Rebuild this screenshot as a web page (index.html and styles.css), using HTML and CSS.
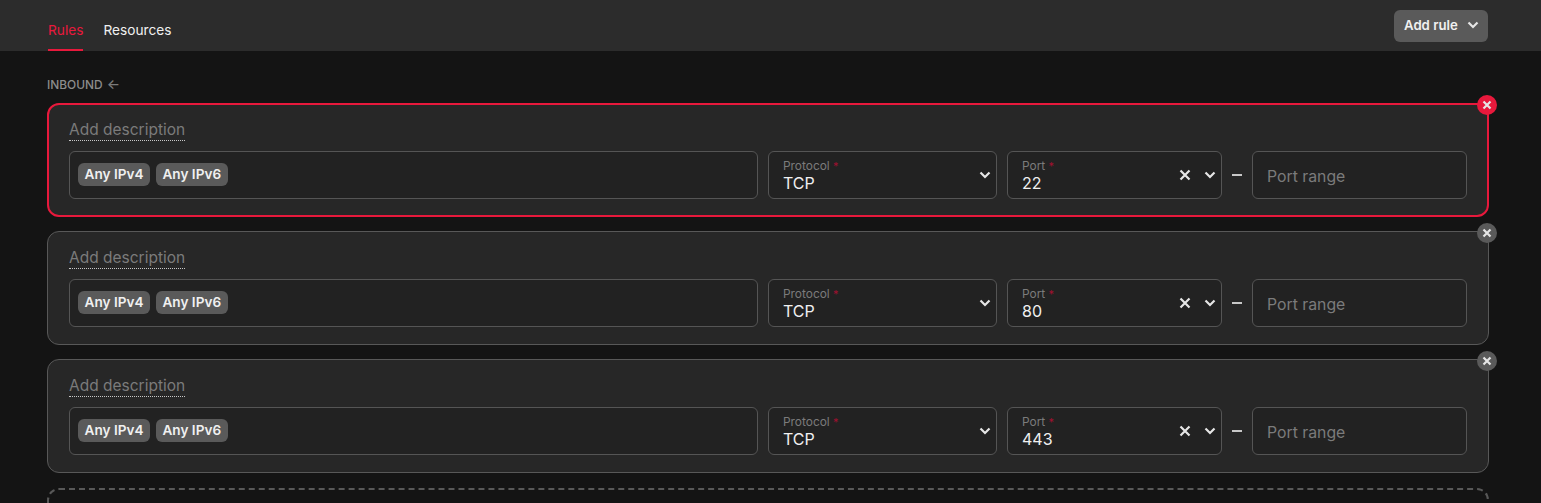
FILE: index.html
```html
<!DOCTYPE html>
<html lang="en">
<head>
    <meta charset="UTF-8">
    <title>Rules</title>
    <link rel="stylesheet" href="styles.css">
</head>
<body>
    <header class="topbar">
        <nav class="tabs">
            <a class="tab active">Rules</a>
            <a class="tab">Resources</a>
        </nav>
        <button type="button" class="add-btn">Add rule
            <svg class="chev" width="12" height="8" viewBox="0 0 12 8"><path d="M1.5 1.5 6 6l4.5-4.5" /></svg>
        </button>
    </header>

    <main class="content">
        <div class="section-title">INBOUND <span class="arrow">←</span></div>

        <!-- rule 1 -->
        <div class="rule selected">
            <span class="remove"><svg width="10" height="10" viewBox="0 0 10 10"><path d="M1.5 1.5l7 7M8.5 1.5l-7 7" /></svg></span>
            <div class="desc"><span>Add description</span></div>
            <div class="fields">
                <div class="box sources"><span class="tag">Any IPv4</span><span class="tag">Any IPv6</span></div>
                <div class="box select protocol">
                    <div class="value-wrap"><label>Protocol <i>*</i></label><div class="value">TCP</div></div>
                    <svg class="chev" width="12" height="8" viewBox="0 0 12 8"><path d="M1.5 1.5 6 6l4.5-4.5" /></svg>
                </div>
                <div class="box select port">
                    <div class="value-wrap"><label>Port <i>*</i></label><div class="value">22</div></div>
                    <svg class="clear" width="12" height="12" viewBox="0 0 12 12"><path d="M1.5 1.5l9 9M10.5 1.5l-9 9" /></svg>
                    <svg class="chev" width="12" height="8" viewBox="0 0 12 8"><path d="M1.5 1.5 6 6l4.5-4.5" /></svg>
                </div>
                <span class="dash"></span>
                <div class="box range">Port range</div>
            </div>
        </div>

        <!-- rule 2 -->
        <div class="rule">
            <span class="remove"><svg width="10" height="10" viewBox="0 0 10 10"><path d="M1.5 1.5l7 7M8.5 1.5l-7 7" /></svg></span>
            <div class="desc"><span>Add description</span></div>
            <div class="fields">
                <div class="box sources"><span class="tag">Any IPv4</span><span class="tag">Any IPv6</span></div>
                <div class="box select protocol">
                    <div class="value-wrap"><label>Protocol <i>*</i></label><div class="value">TCP</div></div>
                    <svg class="chev" width="12" height="8" viewBox="0 0 12 8"><path d="M1.5 1.5 6 6l4.5-4.5" /></svg>
                </div>
                <div class="box select port">
                    <div class="value-wrap"><label>Port <i>*</i></label><div class="value">80</div></div>
                    <svg class="clear" width="12" height="12" viewBox="0 0 12 12"><path d="M1.5 1.5l9 9M10.5 1.5l-9 9" /></svg>
                    <svg class="chev" width="12" height="8" viewBox="0 0 12 8"><path d="M1.5 1.5 6 6l4.5-4.5" /></svg>
                </div>
                <span class="dash"></span>
                <div class="box range">Port range</div>
            </div>
        </div>

        <!-- rule 3 -->
        <div class="rule">
            <span class="remove"><svg width="10" height="10" viewBox="0 0 10 10"><path d="M1.5 1.5l7 7M8.5 1.5l-7 7" /></svg></span>
            <div class="desc"><span>Add description</span></div>
            <div class="fields">
                <div class="box sources"><span class="tag">Any IPv4</span><span class="tag">Any IPv6</span></div>
                <div class="box select protocol">
                    <div class="value-wrap"><label>Protocol <i>*</i></label><div class="value">TCP</div></div>
                    <svg class="chev" width="12" height="8" viewBox="0 0 12 8"><path d="M1.5 1.5 6 6l4.5-4.5" /></svg>
                </div>
                <div class="box select port">
                    <div class="value-wrap"><label>Port <i>*</i></label><div class="value">443</div></div>
                    <svg class="clear" width="12" height="12" viewBox="0 0 12 12"><path d="M1.5 1.5l9 9M10.5 1.5l-9 9" /></svg>
                    <svg class="chev" width="12" height="8" viewBox="0 0 12 8"><path d="M1.5 1.5 6 6l4.5-4.5" /></svg>
                </div>
                <span class="dash"></span>
                <div class="box range">Port range</div>
            </div>
        </div>

        <div class="add-zone"></div>
    </main>
</body>
</html>
```

FILE: styles.css
```css
html, body {
    height: 100%;
}
body {
    margin: 0;
    overflow: hidden;
    background-color: #141414;
    color: #e6e6e6;
    font-family: 'Inter', sans-serif;
}
svg path {
    fill: none;
    stroke: #e6e6e6;
    stroke-width: 2.2;
}

/* top bar */
.topbar {
    box-sizing: border-box;
    height: 51px;
    padding: 10px 53px 0 48px;
    display: flex;
    justify-content: space-between;
    align-items: flex-start;
    background-color: #2c2c2c;
}
.tabs {
    display: flex;
    gap: 20px;
    height: 41px;
}
.tab {
    box-sizing: border-box;
    height: 41px;
    padding-top: 10px;
    font-size: 13.7px;
    line-height: 20px;
    color: #f0f0f0;
}
.tab.active {
    color: #e8193c;
    border-bottom: 2px solid #e8193c;
}
.add-btn {
    box-sizing: border-box;
    width: 94px;
    height: 32px;
    padding: 0 9px 2px 10px;
    display: flex;
    align-items: center;
    justify-content: space-between;
    border: none;
    border-radius: 6px;
    background-color: #5a5a5a;
    color: #f0f0f0;
    font-family: inherit;
    font-size: 13.2px;
    font-weight: 600;
}

/* content */
.content {
    box-sizing: border-box;
    height: 452px;
    overflow: hidden;
    padding: 26px 52px 0 47px;
}
.section-title {
    height: 26px;
    font-size: 11.9px;
    line-height: 14px;
    font-weight: 500;
    color: #8c8c8c;
}
.arrow {
    margin-left: 1px;
    font-size: 14px;
    line-height: 14px;
    color: #7b7b7b;
}
.rule {
    box-sizing: border-box;
    position: relative;
    height: 114px;
    margin-bottom: 14px;
    padding: 16px 21px 0 21px;
    background-color: #272727;
    border: 1px solid #585858;
    border-radius: 12px;
}
.rule.selected {
    border: 2px solid #e8193c;
    padding: 15px 20px 0 20px;
}
.remove {
    position: absolute;
    top: -9px;
    right: -9px;
    width: 20px;
    height: 20px;
    border-radius: 50%;
    background-color: #5a5a5a;
    display: flex;
    align-items: center;
    justify-content: center;
}
.selected .remove {
    top: -10px;
    right: -10px;
    background-color: #e8193c;
}
.desc {
    height: 31px;
    font-size: 15.5px;
    line-height: 20px;
    color: #7b7b7b;
}
.desc span {
    display: inline-block;
    border-bottom: 1px dotted #c8c8c8;
}
.fields {
    display: flex;
    align-items: center;
}
.box {
    box-sizing: border-box;
    height: 48px;
    background-color: #222222;
    border: 1px solid #555555;
    border-radius: 6px;
}
.sources {
    width: 689px;
    margin-right: 10px;
    padding-left: 8px;
    padding-bottom: 1px;
    display: flex;
    align-items: center;
    gap: 6px;
}
.tag {
    height: 23px;
    padding: 0 6.5px;
    border-radius: 6px;
    background-color: #5a5a5a;
    font-size: 13.6px;
    line-height: 23px;
    font-weight: 600;
    color: #f0f0f0;
}
.select {
    display: flex;
    align-items: center;
    padding: 0 5px 0 14px;
}
.protocol {
    width: 229px;
    margin-right: 10px;
}
.port {
    width: 215px;
}
.value-wrap {
    flex: 1;
}
.value-wrap label {
    display: block;
    font-size: 11.9px;
    line-height: 14px;
    color: #7b7b7b;
}
.value-wrap i {
    font-style: normal;
    font-size: 11px;
    color: #a01030;
}
.value {
    padding-top: 1px;
    font-size: 16px;
    line-height: 18px;
    color: #f0f0f0;
}
.clear {
    margin-right: 13px;
}
.dash {
    width: 10px;
    height: 2px;
    margin: 0 10px 0 10px;
    background-color: #c8c8c8;
}
.range {
    width: 215px;
    padding-left: 14px;
    font-size: 15.8px;
    line-height: 49px;
    color: #7b7b7b;
}
.add-zone {
    box-sizing: border-box;
    height: 60px;
    margin-top: 15px;
    border: 2px dashed #585858;
    border-radius: 12px;
}
```
